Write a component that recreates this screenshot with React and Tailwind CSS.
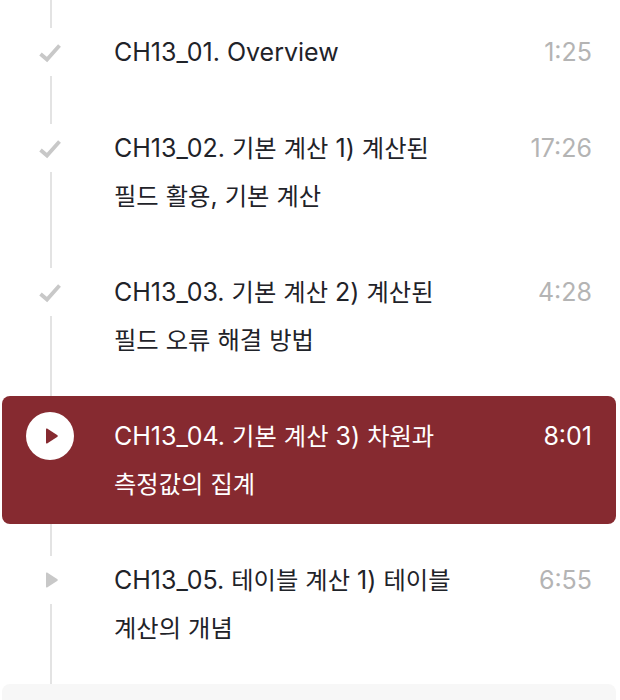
const items = [
  { title: "CH13_01. Overview", time: "1:25", icon: "check" },
  { title: "CH13_02. 기본 계산 1) 계산된 필드 활용, 기본 계산", time: "17:26", icon: "check" },
  { title: "CH13_03. 기본 계산 2) 계산된 필드 오류 해결 방법", time: "4:28", icon: "check" },
  { title: "CH13_04. 기본 계산 3) 차원과 측정값의 집계", time: "8:01", icon: "active" },
  { title: "CH13_05. 테이블 계산 1) 테이블 계산의 개념", time: "6:55", icon: "play" },
];

const PLAY = "M0 1.2 Q0 0 1.1 0.6 L11.5 7.3 Q12 8 11.5 8.7 L1.1 15.4 Q0 16 0 14.8 Z";

function Icon({ type }) {
  if (type === "check") {
    return (
      <svg width="24" height="24" viewBox="0 0 24 24" fill="none">
        <path d="M2.5 14 L9 19.5 L21.5 5.5" stroke="#c8c8c8" strokeWidth="3.8" />
      </svg>
    );
  }
  if (type === "active") {
    return (
      <div className="w-12 h-12 rounded-full bg-white flex items-center justify-center">
        <svg className="ml-1" width="12" height="16" viewBox="0 0 12 16">
          <path d={PLAY} fill="#862a30" />
        </svg>
      </div>
    );
  }
  return (
    <svg className="ml-1" width="12" height="16" viewBox="0 0 12 16">
      <path d={PLAY} fill="#c8c8c8" />
    </svg>
  );
}

function Title({ text }) {
  const parts = text.split(/([가-힣]+)/);
  return parts.map((p, i) =>
    i % 2 === 1 ? (
      <span key={i} className="text-[24.3px]">
        {p}
      </span>
    ) : (
      p
    )
  );
}

function Row({ item }) {
  const active = item.icon === "active";
  return (
    <div className={`relative flex items-start justify-between px-6 py-4 rounded-lg ${active ? "bg-[#862a30] z-10" : ""}`}>
      {!active && (
        <>
          <div className="absolute left-[48px] top-[-16px] w-[2px] h-8 bg-[#e3e3e3]" />
          <div className="absolute left-[48px] top-16 -bottom-4 w-[2px] bg-[#e3e3e3]" />
        </>
      )}
      <div className="flex items-start gap-10 min-w-0">
        <div className="w-12 h-12 shrink-0 flex items-center justify-center">
          <Icon type={item.icon} />
        </div>
        <div className={`w-[345px] break-keep text-[25px] leading-[48px] ${active ? "text-white" : "text-[#1f2329]"}`}>
          <Title text={item.title} />
        </div>
      </div>
      <div className={`text-[25px] leading-[48px] ${active ? "text-white" : "text-[#b4b4b4]"}`}>{item.time}</div>
    </div>
  );
}

export default function App() {
  return (
    <div className="h-[700px] overflow-hidden bg-white pt-3 px-[2px] w-[618px] font-['Inter','Noto_Sans_CJK_KR',sans-serif]">
      <div className="flex flex-col gap-4">
        {items.map((it) => (
          <Row key={it.title} item={it} />
        ))}
        <div className="h-20 rounded-lg bg-[#f7f7f7]" />
      </div>
    </div>
  );
}
